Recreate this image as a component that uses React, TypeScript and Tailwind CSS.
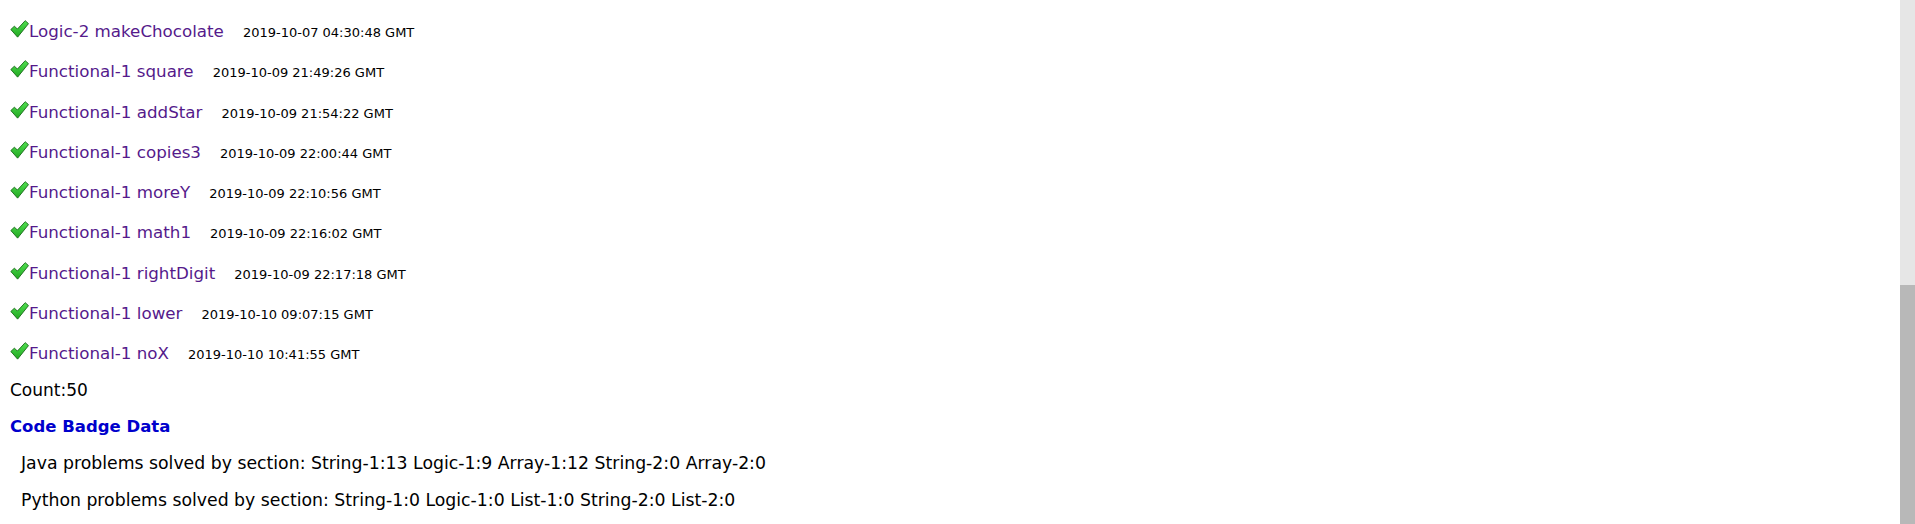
const rows = [
  { name: "Logic-2 makeChocolate", time: "2019-10-07 04:30:48 GMT" },
  { name: "Functional-1 square", time: "2019-10-09 21:49:26 GMT" },
  { name: "Functional-1 addStar", time: "2019-10-09 21:54:22 GMT" },
  { name: "Functional-1 copies3", time: "2019-10-09 22:00:44 GMT" },
  { name: "Functional-1 moreY", time: "2019-10-09 22:10:56 GMT" },
  { name: "Functional-1 math1", time: "2019-10-09 22:16:02 GMT" },
  { name: "Functional-1 rightDigit", time: "2019-10-09 22:17:18 GMT" },
  { name: "Functional-1 lower", time: "2019-10-10 09:07:15 GMT" },
  { name: "Functional-1 noX", time: "2019-10-10 10:41:55 GMT" },
]

const Check = () => (
  <svg
    viewBox="0 0 18 17"
    className="mb-[-1px] inline-block h-[18px] w-[19px] align-baseline"
  >
    <defs>
      <linearGradient id="chk" x1="0" y1="0" x2="0" y2="1">
        <stop offset="0" stopColor="#4fe04f" />
        <stop offset="1" stopColor="#22a822" />
      </linearGradient>
    </defs>
    <path
      d="M0.8 9 L4.2 5.8 L7 8.6 L14.4 0.6 L17.5 3.4 L7.2 16.2 Z"
      fill="url(#chk)"
      stroke="#1e6e1e"
      strokeWidth="0.9"
      strokeLinejoin="round"
    />
  </svg>
)

const DoneRow = ({ name, time }) => {
  return (
    <div className="h-[40.3px] whitespace-nowrap leading-[40px]">
      <Check />
      <a href="#" className="text-[16.7px] text-[#551a8b]">
        {name}
      </a>
      <span className="ml-[19px] text-[13px]">{time}</span>
    </div>
  )
}

export default function App() {
  return (
    <div className="flex h-[524px] w-full overflow-hidden bg-white font-['DejaVu_Sans',Verdana,sans-serif] text-[16.5px] text-black">
      <div className="flex-1 pl-[10px] pt-[11px]">
        {rows.map((r) => (
          <DoneRow key={r.name} name={r.name} time={r.time} />
        ))}
        <div className="h-[35.6px] text-[17px] leading-[32px]">Count:50</div>
        <div className="h-[36px] font-bold leading-[36px] text-[#0000cc]">
          Code Badge Data
        </div>
        <div className="h-[37px] pl-[11px] text-[17.3px] leading-[37px]">
          Java problems solved by section: String-1:13 Logic-1:9 Array-1:12
          String-2:0 Array-2:0
        </div>
        <div className="h-[37px] pl-[11px] text-[17.3px] leading-[37px]">
          Python problems solved by section: String-1:0 Logic-1:0 List-1:0
          String-2:0 List-2:0
        </div>
      </div>
      <div className="flex w-[15px] flex-col bg-[#e6e6e6]">
        <div className="h-[285px]" />
        <div className="flex-1 bg-[#b8b8b8]" />
      </div>
    </div>
  )
}
